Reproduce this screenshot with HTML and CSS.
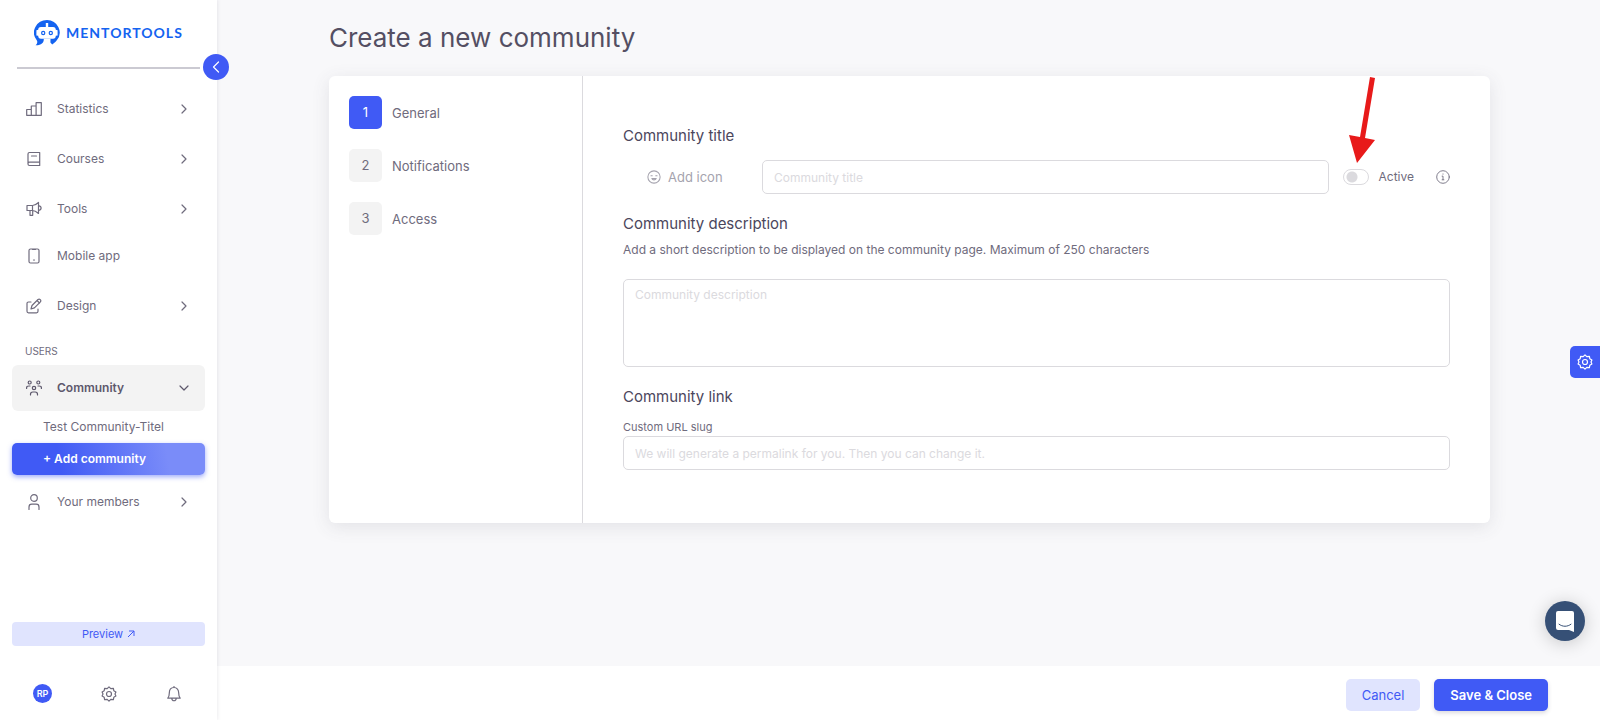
FILE: index.html
```html
<!DOCTYPE html>
<html lang="en">
  <head>
    <meta charset="utf-8">
    <title>Create a new community</title>
    <link rel="stylesheet" href="styles.css">
  </head>
  <body>

    <!-- Shared icons -->
    <svg class="sprite" aria-hidden="true">
      <symbol id="chevron" viewBox="0 0 16 16">
        <path d="M6 4l4 4-4 4"/>
      </symbol>
      <symbol id="gear" viewBox="0 0 16 16">
        <path d="M6.2 2.6L8 .8l1.800 1.800 2.600-.2.4 2.300 2.100 1.300L14 8l.9 2-2.100 1.300-.4 2.300-2.600-.2L8 15.200l-1.800-1.800-2.600.2-.4-2.300L1.100 10 2 8l-.9-2 2.100-1.300.4-2.300z"/>
        <circle cx="8" cy="8" r="2.5"/>
      </symbol>
    </svg>

    <div class="layout">
      <aside class="sidebar">
        <div class="brand">
          <svg class="brand-icon" viewBox="0 0 26 26">
            <path fill="#1463f0" d="M13 0a13 12.5 0 0 1 9.8 20.3c-1.2 1.7-2.8 3-4.6 4.3l-1.8-2.2.1-3.600H9.800c.2 4-2.400 6.600-8.200 6.400 1.800-1.600 2.200-3.600 1-5.200A13 12.500 0 0 1 13 0z"/>
            <path fill="#fff" d="M11.8 3h2.400v4H19c2 0 2.800 1.200 2.800 2.800l1.800.4v5.200l-1.800.4c0 2-1 3-2.800 3H7c-1.800 0-2.800-1-2.800-3l-1.800-.4v-5.200l1.800-.4C4.200 8.200 5 7 7 7h4.800z"/>
            <circle class="brand-eye" cx="9.2" cy="13" r="1.6"/>
            <circle class="brand-eye" cx="16.8" cy="13" r="1.6"/>
          </svg>
          <span class="brand-name">MENTORTOOLS</span>
          <button class="collapse" type="button" aria-label="Collapse menu">
            <svg class="icon" viewBox="0 0 16 16"><path d="M10.500 3L5.500 8l5 5"/></svg>
          </button>
        </div>

        <nav class="nav">
          <a class="nav-item" href="#">
            <svg class="icon" viewBox="0 0 16 16"><path d="M.7 14.300V8.500h4.600v5.800M5.300 14.300V5h4.800v9.300M10.100 14.300V1.700h5.200v12.600M.7 14.300h14.600"/></svg>
            <span>Statistics</span>
            <svg class="icon chevron"><use href="#chevron"/></svg>
          </a>
          <a class="nav-item" href="#">
            <svg class="icon" viewBox="0 0 16 16"><path d="M3.500 1.500h10.200v13H3.500c-1 0-1.500-.5-1.500-1.500V3c0-1 .5-1.500 1.500-1.500zM2 12.500c0-.8.5-1.300 1.500-1.300h10.200M5.500 5h5"/></svg>
            <span>Courses</span>
            <svg class="icon chevron"><use href="#chevron"/></svg>
          </a>
          <a class="nav-item" href="#">
            <svg class="icon" viewBox="0 0 16 16"><path d="M1 4.500h5.500c2 0 4-1.200 6-3v11c-2-1.800-4-3-6-3H1zM6.500 4.500v5M4 9.500v4.800h2.700V9.500M12.500 4.500c1.700.3 2.600 1.200 2.600 2.500s-.9 2.200-2.600 2.500"/></svg>
            <span>Tools</span>
            <svg class="icon chevron"><use href="#chevron"/></svg>
          </a>
          <a class="nav-item nav-single" href="#">
            <svg class="icon" viewBox="0 0 16 16"><rect x="3" y="1" width="10" height="14" rx="1.5"/><path d="M6.500 1.500h3M7.500 12h1"/></svg>
            <span>Mobile app</span>
          </a>
          <a class="nav-item" href="#">
            <svg class="icon" viewBox="0 0 16 16"><path d="M5 4H2.500C1.600 4 1 4.600 1 5.500v7.800c0 .9.6 1.500 1.500 1.500h8c.9 0 1.500-.6 1.500-1.500V11M5 11l1-3.500 6-6c1.600-1.200 3.600.8 2.400 2.400l-6 6zM11 2.500L13.500 5"/></svg>
            <span>Design</span>
            <svg class="icon chevron"><use href="#chevron"/></svg>
          </a>

          <h2 class="nav-heading">USERS</h2>

          <a class="nav-item nav-open" href="#">
            <svg class="icon" viewBox="0 0 16 16"><circle cx="3.700" cy="2.500" r="1.500"/><circle cx="12.300" cy="2.500" r="1.500"/><circle cx="8" cy="8" r="1.700"/><path d="M.6 8.500v-.7C.6 6.500 1.500 6 3 6h1M15.400 8.500v-.7c0-1.300-.9-1.800-2.400-1.800h-1M4.500 15v-.8c0-1.500.9-2.200 2.300-2.200h2.400c1.400 0 2.300.7 2.300 2.200v.8"/></svg>
            <span>Community</span>
            <svg class="icon chevron" viewBox="0 0 16 16"><path d="M4 6l4 4 4-4"/></svg>
          </a>
          <a class="nav-sub" href="#">Test Community-Titel</a>
          <a class="nav-sub nav-add" href="#">+ Add community</a>
          <a class="nav-item" href="#">
            <svg class="icon" viewBox="0 0 16 16"><circle cx="8" cy="4" r="3.300"/><path d="M3 15.500V13c0-1.800 1-2.800 2.800-2.800h4.400c1.800 0 2.800 1 2.800 2.800v2.500"/></svg>
            <span>Your members</span>
            <svg class="icon chevron"><use href="#chevron"/></svg>
          </a>
        </nav>

        <a class="preview" href="#">Preview
          <svg class="preview-icon" viewBox="0 0 8 8"><path d="M1 7l6-6M2 1h5v5"/></svg>
        </a>

        <div class="account">
          <button class="avatar" type="button">RP</button>
          <button class="icon-button" type="button" aria-label="Settings">
            <svg class="icon"><use href="#gear"/></svg>
          </button>
          <button class="icon-button" type="button" aria-label="Notifications">
            <svg class="icon" viewBox="0 0 16 16"><path d="M1.800 12.200C3 11 3.300 10 3.300 7c0-3 1.700-5.500 4.700-5.500S12.700 4 12.700 7c0 3 .3 4 1.500 5.200zM5.800 12.500c.2 3 4.200 3 4.400 0M8 .5v1"/></svg>
          </button>
        </div>
      </aside>

      <div class="page">
        <main class="content">
          <h1>Create a new community</h1>

          <div class="card">
            <ol class="steps">
              <li class="step active"><button type="button"><span class="step-number">1</span>General</button></li>
              <li class="step"><button type="button"><span class="step-number">2</span>Notifications</button></li>
              <li class="step"><button type="button"><span class="step-number">3</span>Access</button></li>
            </ol>

            <form class="form" id="community-form">
              <label class="form-title" for="title">Community title</label>
              <div class="title-row">
                <button class="add-icon" type="button">
                  <svg class="icon" viewBox="0 0 16 16"><circle cx="8" cy="8" r="7"/><path d="M4.500 6.500h1.500M10 6.500h1.500M5.500 9.800c1 2 4 2 5 0z"/></svg>
                  Add icon
                </button>
                <input class="field" type="text" id="title" placeholder="Community title">
                <div class="status">
                  <input class="switch" type="checkbox" id="active">
                  <label for="active">Active</label>
                  <svg class="icon info" viewBox="0 0 16 16"><circle cx="8" cy="8" r="7.200"/><path d="M7 7h1v4M7 11.200h2M8 4.500v.3"/></svg>
                  <svg class="arrow" viewBox="0 0 28 86"><path d="M21 0l5 1-10 60 10 2L8 86 0 58l11 2z"/></svg>
                </div>
              </div>

              <label class="form-title" for="description">Community description</label>
              <p class="hint">Add a short description to be displayed on the community page. Maximum of 250 characters</p>
              <textarea class="field" id="description" placeholder="Community description"></textarea>

              <h2 class="form-title">Community link</h2>
              <label class="slug-label" for="slug">Custom URL slug</label>
              <input class="field" type="text" id="slug" placeholder="We will generate a permalink for you. Then you can change it.">
            </form>
          </div>
        </main>

        <footer class="footer">
          <button class="btn btn-light" type="button">Cancel</button>
          <button class="btn btn-primary" type="submit" form="community-form">Save &amp; Close</button>
        </footer>
      </div>
    </div>

    <button class="customizer" type="button" aria-label="Customize">
      <svg class="icon"><use href="#gear"/></svg>
    </button>
    <button class="chat" type="button" aria-label="Open chat">
      <svg viewBox="0 0 18 21"><path fill="#fff" d="M2 0h14a2 2 0 0 1 2 2v19l-5-2H2a2 2 0 0 1-2-2V2a2 2 0 0 1 2-2z"/><path fill="none" stroke="#365076" stroke-linecap="round" d="M3 13.200c3.500 2.800 8.500 2.800 12 0"/></svg>
    </button>

  </body>
</html>
```
FILE: styles.css
```css
* {
  box-sizing: border-box;
}

body {
  margin: 0;
  font-family: Inter, "Liberation Sans", sans-serif;
  font-size: 12px;
  line-height: 20px;
  color: #6f6b7d;
  background-color: #f8f8fa;
}

a {
  color: inherit;
  text-decoration: none;
}

button {
  padding: 0;
  border: 0;
  font: inherit;
  color: inherit;
  background: none;
  cursor: pointer;
}

.sprite {
  display: none;
}

.icon {
  width: 16px;
  height: 16px;
  flex-shrink: 0;
  fill: none;
  stroke: currentColor;
  stroke-width: 1.2;
  stroke-linejoin: round;
  stroke-linecap: round;
}

.layout {
  display: flex;
  min-height: 100vh;
}

/* Sidebar */
.sidebar {
  position: relative;
  z-index: 1;
  display: flex;
  flex-direction: column;
  flex-shrink: 0;
  width: 217px;
  padding: 0 12px 17px;
  background-color: #fff;
  box-shadow: 0 0 4px rgba(75, 70, 92, 0.15);
}

.brand {
  position: relative;
  display: flex;
  align-items: center;
  gap: 6px;
  height: 69px;
  margin: 0 5px 17px;
  padding: 0 0 2px 17px;
  border-bottom: 2px solid #cbcad2;
}

.brand-icon {
  width: 26px;
  height: 26px;
}

.brand-eye {
  fill: none;
  stroke: #1463f0;
  stroke-width: 1.2;
}

.brand-name {
  font-family: Lato, sans-serif;
  font-size: 14px;
  font-weight: 700;
  letter-spacing: 1px;
  color: #1463f0;
}

.collapse {
  position: absolute;
  right: -29px;
  bottom: -13px;
  display: flex;
  align-items: center;
  justify-content: center;
  width: 26px;
  height: 26px;
  border-radius: 50%;
  color: #fff;
  background-color: #405af5;
}

.nav {
  display: flex;
  flex-direction: column;
  gap: 4px;
}

.nav-item {
  display: flex;
  align-items: center;
  gap: 15px;
  height: 46px;
  padding: 0 13px 0 14px;
  border-radius: 6px;
}

.nav-single {
  height: 40px;
  margin-bottom: 3px;
}

.chevron {
  margin-left: auto;
}

.nav-heading {
  margin: 8px 13px 0;
  font-size: 10px;
  font-weight: 400;
}

.nav-open {
  font-weight: 600;
  color: #5d586c;
  background-color: #f3f3f3;
}

.nav-sub {
  padding: 2px 31px;
}

.nav-add {
  padding: 6px 31px;
  border-radius: 5px;
  font-weight: 600;
  color: #fff;
  background-image: linear-gradient(80deg, #405af5 25%, #7a8cf9 80%);
  box-shadow: 0 2px 5px rgba(64, 90, 245, 0.5);
}

.preview {
  display: flex;
  align-items: center;
  justify-content: center;
  gap: 4px;
  margin-top: auto;
  height: 24px;
  border-radius: 4px;
  font-size: 11px;
  color: #405af5;
  background-color: #e0e4fe;
}

.preview-icon {
  width: 8px;
  height: 8px;
  fill: none;
  stroke: currentColor;
}

.account {
  display: flex;
  align-items: center;
  justify-content: space-between;
  margin-top: 38px;
  padding: 0 23px 0 21px;
}

.avatar {
  width: 19px;
  height: 19px;
  border-radius: 50%;
  font-size: 9px;
  font-weight: 600;
  line-height: 19px;
  color: #fff;
  background-color: #405af5;
}

.icon-button {
  display: flex;
}

/* Page */
.page {
  display: flex;
  flex: 1;
  flex-direction: column;
  min-width: 0;
}

.content {
  flex: 1;
  padding: 20px 110px 20px 112px;
}

h1 {
  margin: 0 0 20px;
  font-size: 26px;
  font-weight: 400;
  line-height: 36px;
  color: #544f63;
}

.card {
  display: flex;
  border-radius: 6px;
  background-color: #fff;
  box-shadow: 0 4px 18px rgba(75, 70, 92, 0.12);
}

.steps {
  display: flex;
  flex-direction: column;
  gap: 20px;
  width: 254px;
  margin: 0;
  padding: 20px;
  border-right: 1px solid #dbdade;
  font-size: 13px;
  list-style: none;
}

.step button {
  display: flex;
  align-items: center;
  gap: 10px;
}

.step-number {
  width: 33px;
  border-radius: 5px;
  line-height: 33px;
  background-color: #f3f3f3;
}

.active .step-number {
  color: #fff;
  background-color: #405af5;
}

.form {
  display: flex;
  flex: 1;
  flex-direction: column;
  padding: 49px 40px 53px;
}

.form-title {
  margin: 0;
  font-size: 15px;
  font-weight: 400;
  line-height: 22px;
  color: #4b465c;
}

.field {
  width: 100%;
  height: 34px;
  padding: 6px 11px;
  border: 1px solid #dbdade;
  border-radius: 5px;
  font: inherit;
  color: #6f6b7d;
  background-color: #fff;
  resize: none;
}

.field::placeholder {
  color: #dbdade;
  opacity: 1;
}

textarea.field {
  height: 88px;
  padding-top: 5px;
  margin-bottom: 19px;
}

.title-row {
  display: flex;
  align-items: center;
  gap: 14px;
  margin: 13px 0 19px;
}

.add-icon {
  display: flex;
  flex-shrink: 0;
  align-items: center;
  gap: 7px;
  width: 125px;
  padding-left: 24px;
  font-size: 13px;
  color: #a5a3ae;
}

.add-icon .icon {
  width: 14px;
  height: 14px;
}

.status {
  position: relative;
  display: flex;
  flex-shrink: 0;
  align-items: center;
  gap: 10px;
}

.switch {
  width: 26px;
  height: 16px;
  margin: 0;
  border: 1px solid #dbdade;
  border-radius: 8px;
  appearance: none;
  background: radial-gradient(circle at 8px 7px, #dbdade 5px, transparent 6px);
}

.switch:checked {
  border-color: #405af5;
  background: radial-gradient(circle at 16px 7px, #405af5 5px, transparent 6px);
}

.info {
  width: 14px;
  height: 14px;
  margin-left: 12px;
  stroke-width: 1;
}

/* Points at the switch */
.arrow {
  position: absolute;
  bottom: 24px;
  left: 6px;
  width: 28px;
  height: 86px;
  fill: #e81a1a;
  pointer-events: none;
}

.hint {
  margin: 5px 0 19px;
}

.slug-label {
  margin-top: 11px;
  font-size: 11px;
  line-height: 17px;
}

/* Footer */
.footer {
  display: flex;
  justify-content: flex-end;
  gap: 14px;
  padding: 13px 52px 9px;
  background-color: #fff;
}

.btn {
  padding: 6px 16px;
  border-radius: 5px;
  font-size: 13px;
}

.btn-light {
  color: #405af5;
  background-color: #e0e4fe;
}

.btn-primary {
  font-weight: 600;
  color: #fff;
  background-color: #405af5;
  box-shadow: 0 2px 4px rgba(75, 70, 92, 0.2);
}

/* Floating buttons */
.customizer {
  position: fixed;
  top: 346px;
  right: 0;
  display: flex;
  align-items: center;
  justify-content: center;
  width: 30px;
  height: 32px;
  border-radius: 5px 0 0 5px;
  color: #fff;
  background-color: #405af5;
}

.chat {
  position: fixed;
  right: 15px;
  bottom: 79px;
  display: flex;
  align-items: center;
  justify-content: center;
  width: 40px;
  height: 40px;
  border-radius: 50%;
  background-color: #365076;
  box-shadow: 0 2px 18px rgba(0, 0, 0, 0.2);
}

.chat svg {
  width: 18px;
  height: 21px;
}
```
